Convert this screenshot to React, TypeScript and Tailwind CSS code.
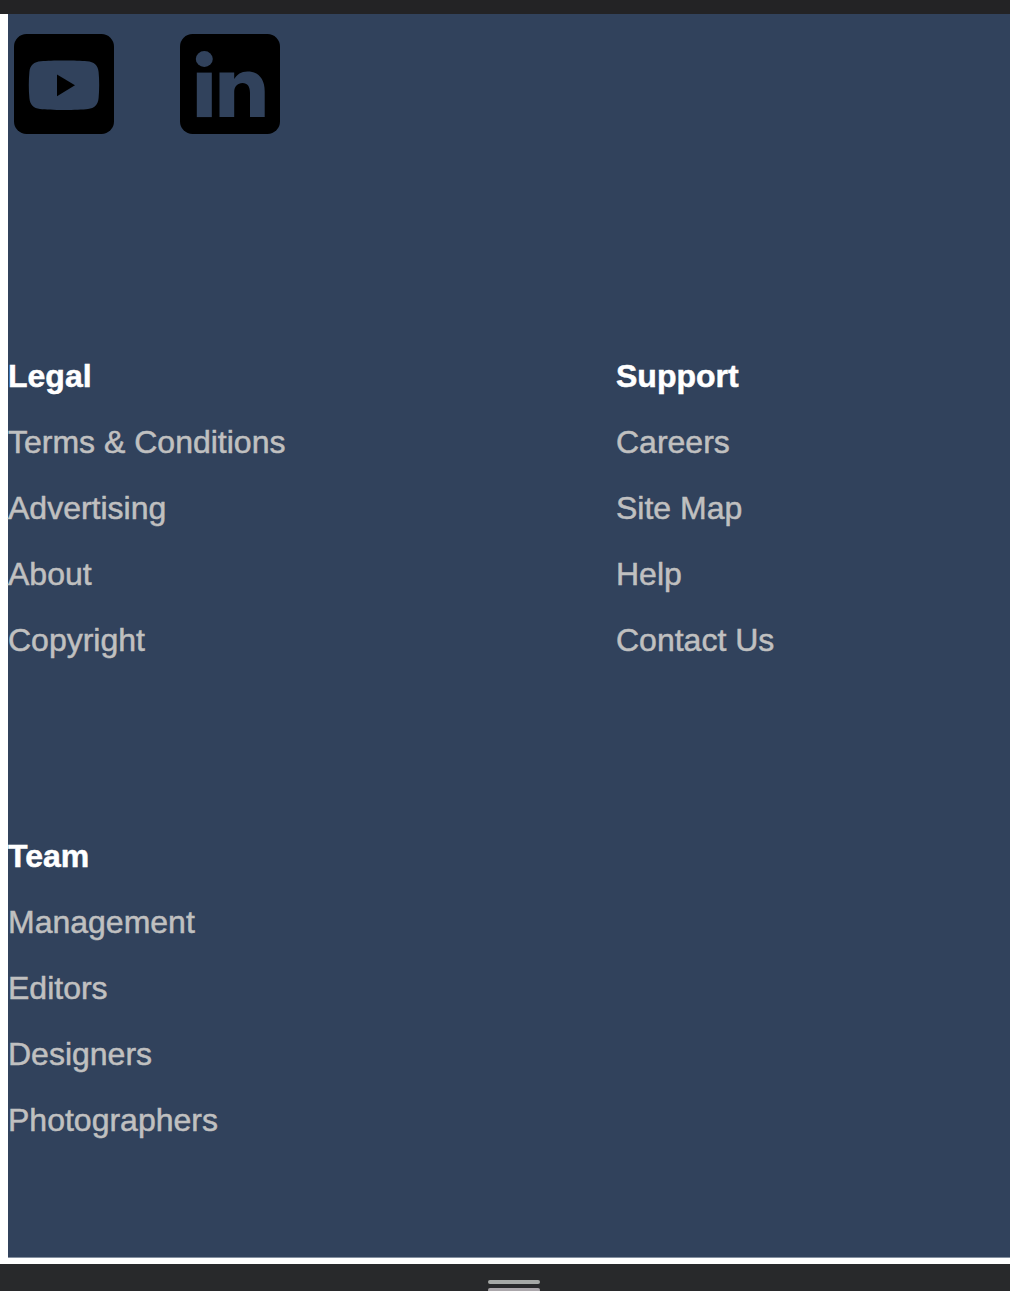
type LinkGroup = { title: string; links: string[] };

const groups: LinkGroup[] = [
  { title: 'Legal', links: ['Terms & Conditions', 'Advertising', 'About', 'Copyright'] },
  { title: 'Support', links: ['Careers', 'Site Map', 'Help', 'Contact Us'] },
  { title: 'Team', links: ['Management', 'Editors', 'Designers', 'Photographers'] },
];

function YouTubeIcon() {
  return (
    <svg viewBox="0 0 100 100" className="size-[100px]" aria-label="YouTube">
      <rect width="100" height="100" rx="12.500" fill="#000" />
      <path
        d="M50 26.500C60 26.500 67 26.700 73 27.200C80 27.700 84 31 84.600 38C85.400 46 85.400 56 84.600 64C84 71 80.500 74.200 74 75C64 76.300 36 76.300 26 75C19.500 74.200 16 71 15.400 64C14.600 56 14.600 46 15.400 38C16 31 20 27.700 27 27.200C33 26.700 40 26.500 50 26.500Z"
        fill="#31425c"
      />
      <path d="M43 40.500L61 51.300L43 62.200Z" fill="#000" />
    </svg>
  );
}

function LinkedInIcon() {
  return (
    <svg viewBox="0 0 100 100" className="size-[100px]" aria-label="LinkedIn">
      <rect width="100" height="100" rx="12.500" fill="#000" />
      <g fill="#31425c">
        <ellipse cx="24.300" cy="25" rx="8.500" ry="7.900" />
        <rect x="16.800" y="38.600" width="15" height="44.500" />
        <path d="M39.500 38.600H54.200V45C57 40.600 61 37.500 67.500 37.500C78 37.500 84.700 44.500 84.700 57.500V83.100H70V59C70 52.500 67.500 49 62.500 49C57.500 49 54.200 52.500 54.200 58V83.100H39.500Z" />
      </g>
    </svg>
  );
}

export default function App() {
  return (
    <div className="flex h-[1291px] w-full flex-col overflow-hidden bg-white font-['Liberation_Sans',Arial,sans-serif]">
      <div className="h-[14px] shrink-0 bg-[#232325]" />
      <footer className="ml-2 h-[1244px] shrink-0 border-b border-[#8490a0] bg-[#31425c]">
        <div className="flex gap-[66px] pl-1.5 pt-5">
          <YouTubeIcon />
          <LinkedInIcon />
        </div>
        <div className="mt-[209px] grid grid-cols-[608px_1fr] gap-y-[150px]">
          {groups.map((group) => (
            <section key={group.title}>
              <h2 className="h-[66px] text-[32px] leading-[66px] font-bold text-white [-webkit-text-stroke:0.5px]">
                {group.title}
              </h2>
              <ul>
                {group.links.map((link) => (
                  <li
                    key={link}
                    className="h-[66px] text-[32px] leading-[66px] text-[#c0c0c0] [-webkit-text-stroke:0.5px]"
                  >
                    <a href="#">{link}</a>
                  </li>
                ))}
              </ul>
            </section>
          ))}
        </div>
      </footer>
      <div className="mt-1.5 flex h-[27px] shrink-0 flex-col items-center gap-1 overflow-hidden bg-[#28292b] pt-4 pl-[18px]">
        <div className="h-1 w-[52px] shrink-0 rounded-[2px] bg-[#a5a8a6]" />
        <div className="h-1 w-[52px] shrink-0 rounded-[2px] bg-[#aaa6aa]" />
      </div>
    </div>
  );
}
